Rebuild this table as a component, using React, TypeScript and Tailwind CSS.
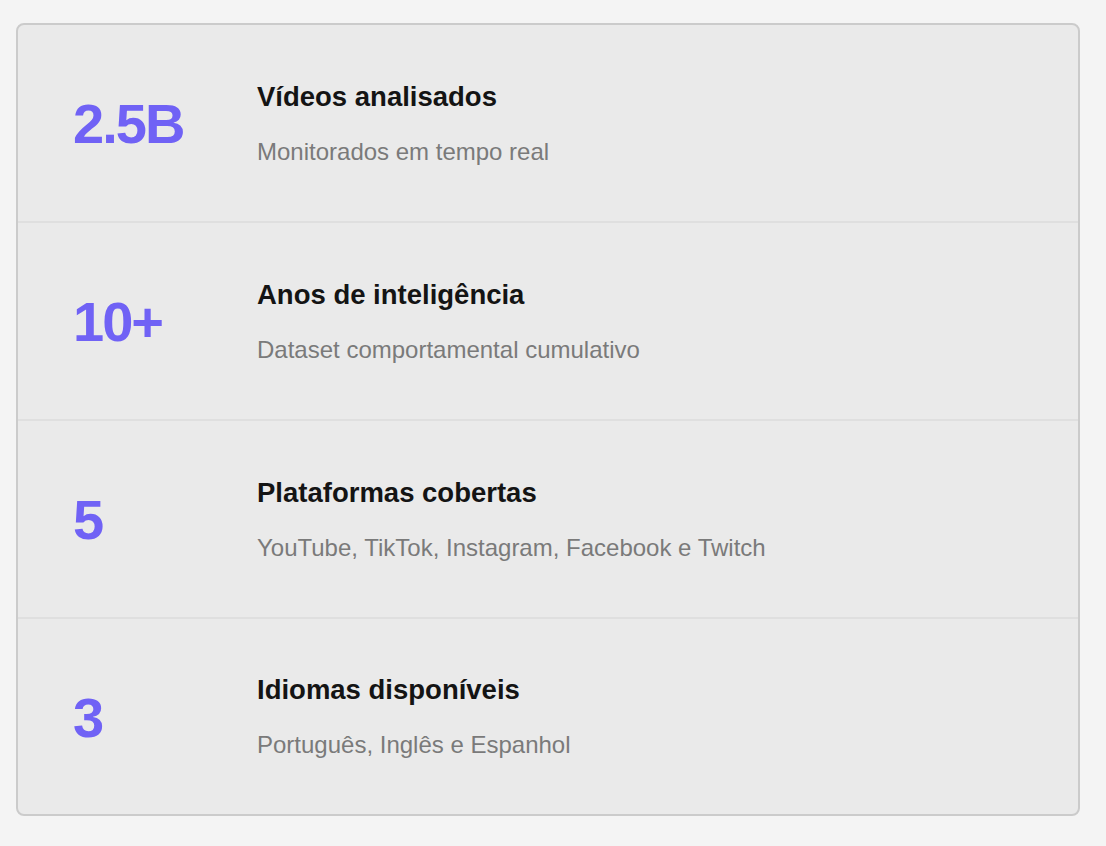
import React from 'react';

const stats = [
    { value: '2.5B', title: 'Vídeos analisados', subtitle: 'Monitorados em tempo real' },
    { value: '10+', title: 'Anos de inteligência', subtitle: 'Dataset comportamental cumulativo' },
    { value: '5', title: 'Plataformas cobertas', subtitle: 'YouTube, TikTok, Instagram, Facebook e Twitch' },
    { value: '3', title: 'Idiomas disponíveis', subtitle: 'Português, Inglês e Espanhol' },
];

export default function App() {
    return (
        <div className="min-h-screen bg-[#f4f4f4] pt-[23px] pl-4 font-['Liberation_Sans',Arial,sans-serif]">
            <div className="w-[1064px] rounded-lg border-2 border-[#cbcbcb] bg-[#eaeaea] overflow-hidden">
                {stats.map((stat, i) => (
                    <div
                        key={i}
                        className={`flex items-center pl-[55px] ${i < stats.length - 1 ? 'h-[198px] border-b-2 border-[#dfdfdf]' : 'h-[195px]'}`}
                    >
                        <div className="w-[184px] shrink-0 pt-[2px] text-[56px] font-bold leading-none tracking-[-0.035em] text-[#7062f5]">
                            {stat.value}
                        </div>
                        <div className="flex flex-col pt-[2px]">
                            <h3 className="text-[27.5px] font-bold leading-8 text-[#141414]">{stat.title}</h3>
                            <p className="mt-[23px] text-[24px] leading-8 text-[#7a7a7a]">{stat.subtitle}</p>
                        </div>
                    </div>
                ))}
            </div>
        </div>
    );
}
